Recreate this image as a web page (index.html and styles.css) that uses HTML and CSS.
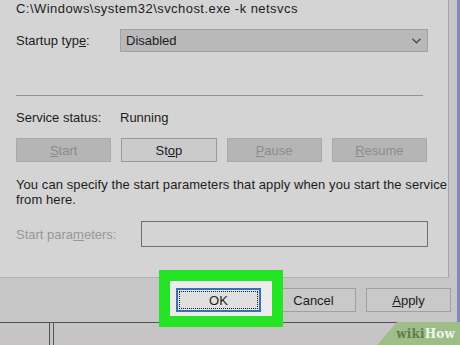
FILE: index.html
```html
<!DOCTYPE html>
<html lang="en">
<head>
    <meta charset="UTF-8">
    <title>Service Properties</title>
    <link rel="stylesheet" href="styles.css">
</head>
<body>

<div class="screen">
    <div class="top">
        <div class="dialog">
            <div class="panel">
                <p class="path">C:\Windows\system32\svchost.exe -k netsvcs</p>

                <div class="row startup">
                    <span class="label">Startup typ<u>e</u>:</span>
                    <div class="select">
                        <span>Disabled</span>
                        <svg class="chevron" width="9" height="6" viewBox="0 0 9 6">
                            <polyline points="0.5,0.8 4.5,4.8 8.5,0.8" fill="none" stroke="#4a4a4a" stroke-width="1.3"/>
                        </svg>
                    </div>
                </div>

                <hr class="sep">

                <div class="row status">
                    <span class="label">Service status:</span>
                    <span>Running</span>
                </div>

                <div class="actions">
                    <button class="btn" disabled><u>S</u>tart</button>
                    <button class="btn active">St<u>o</u>p</button>
                    <button class="btn" disabled><u>P</u>ause</button>
                    <button class="btn" disabled><u>R</u>esume</button>
                </div>

                <p class="note">You can specify the start parameters that apply when you start the service<br>from here.</p>

                <div class="row params">
                    <span class="label muted">Start para<u>m</u>eters:</span>
                    <div class="field"></div>
                </div>
            </div>

            <div class="footer">
                <div class="highlight"></div>
                <button class="btn ok">OK</button>
                <button class="btn">Cancel</button>
                <button class="btn"><u>A</u>pply</button>
            </div>
        </div>
        <div class="edge"></div>
    </div>

    <div class="behind">
        <div class="cols"></div>
        <div class="brand"><span class="wiki">wiki</span><span class="how">How</span></div>
    </div>
</div>

</body>
</html>
```

FILE: styles.css
```css
body {
    margin: 0;
    width: 460px;
    height: 345px;
    overflow: hidden;
    font-family: "Liberation Sans", Arial, sans-serif;
    font-size: 13px;
    color: #1c1c1c;
    background-color: #c6c6c6;
}

.screen {
    display: flex;
    flex-direction: column;
}

.top {
    display: flex;
    height: 322px;
}

.dialog {
    width: 457px;
    background-color: #c6c6c6;
    display: flex;
    flex-direction: column;
    position: relative;
}

.edge {
    width: 3px;
    background-color: #8686bf;
}

.panel {
    width: 448px;
    height: 277px;
    background-color: #d4d4d4;
    border-right: 1px solid #a4a4a4;
    border-bottom: 1px solid #b2b2b2;
}

.panel > * {
    margin-left: 16px;
}

.path {
    margin-top: 0;
    margin-bottom: 0;
    padding-top: 1px;
    line-height: 15px;
    letter-spacing: 0.45px;
}

.row {
    display: flex;
    align-items: center;
    line-height: 15px;
}

.label {
    width: 104px;
}

.startup {
    margin-top: 13px;
}

.select {
    box-sizing: border-box;
    width: 308px;
    height: 23px;
    border: 1px solid #a2a2a2;
    background-color: #b9b9b9;
    display: flex;
    align-items: center;
    justify-content: space-between;
    padding: 0 6px 0 5px;
}

.sep {
    margin-top: 43px;
    margin-bottom: 0;
    margin-right: 25px;
    border: none;
    border-top: 1px solid #949494;
    height: 0;
}

.status {
    margin-top: 14px;
}

.actions {
    margin-top: 13px;
    margin-right: 21px;
    display: flex;
    gap: 10px;
}

.btn {
    font-family: "Liberation Sans", Arial, sans-serif;
    font-size: 13px;
    height: 24px;
    padding: 0;
    border: 1px solid #a0a0a0;
    background-color: #c9c9c9;
    color: #1c1c1c;
}

.actions .btn {
    flex: 1;
}

.actions .btn:disabled {
    background-color: #b5b5b5;
    border-color: #aaaaaa;
    color: #8c8c8c;
}

.actions .active {
    background-color: #cbcbcb;
    border-color: #9a9a9a;
}

.note {
    margin-top: 15px;
    margin-bottom: 0;
    line-height: 15px;
    letter-spacing: 0.08px;
}

.params {
    margin-top: 14px;
}

.params .label {
    width: 125px;
}

.muted {
    color: #979797;
}

.field {
    box-sizing: border-box;
    width: 287px;
    height: 26px;
    border: 1px solid #6f6f6f;
    background-color: #d4d4d4;
}

.footer {
    flex: 1;
    display: flex;
    align-items: center;
    justify-content: flex-end;
    gap: 10px;
    padding-right: 6px;
    position: relative;
}

.footer .btn {
    width: 85px;
}

.highlight {
    position: absolute;
    left: 159px;
    top: -8px;
    width: 102px;
    height: 35px;
    border: 11px solid #25e425;
    background-color: #ececec;
    z-index: 1;
}

.ok {
    position: relative;
    z-index: 2;
    border: 2px solid #3571b9;
    background-color: #e0e0e0;
}

.ok::after {
    content: "";
    position: absolute;
    top: 1px;
    left: 1px;
    right: 1px;
    bottom: 1px;
    border: 1px dotted #1a1a1a;
}

.behind {
    height: 22px;
    border-top: 1px solid #4b5263;
    background-color: #c6c4c4;
    position: relative;
}

.cols {
    margin-left: 49px;
    width: 3px;
    height: 22px;
    border-left: 1px solid #555;
    border-right: 1px solid #555;
}

.brand {
    position: absolute;
    right: 0;
    bottom: 0;
    box-sizing: border-box;
    width: 83px;
    height: 23px;
    padding-right: 5px;
    text-align: right;
    background-color: #9fbd88;
    clip-path: polygon(20px 0, 100% 0, 100% 100%, 0 100%);
    font-family: "DejaVu Serif", "Liberation Serif", serif;
    font-weight: bold;
    font-size: 12px;
    letter-spacing: 0.2px;
    line-height: 24px;
}

.wiki {
    color: #5e7e4c;
}

.how {
    color: #f1f5ee;
}
```
